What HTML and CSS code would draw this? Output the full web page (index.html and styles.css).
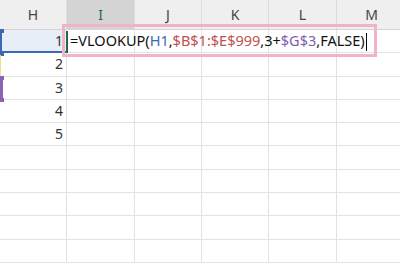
FILE: index.html
```html
<!DOCTYPE html>
<html lang="ja">
<head>
    <meta charset="UTF-8">
    <meta name="viewport" content="width=device-width, initial-scale=1.0">
    <title>VLOOKUP</title>
    <link rel="stylesheet" href="styles.css">
</head>
<body>
    <div class="sheet">
        <div class="grid">
            <div class="col-head">H</div>
            <div class="col-head selected">I</div>
            <div class="col-head">J</div>
            <div class="col-head">K</div>
            <div class="col-head">L</div>
            <div class="col-head">M</div>

            <div class="cell num ref-h1">1</div><div class="cell"></div><div class="cell"></div><div class="cell"></div><div class="cell"></div><div class="cell"></div>
            <div class="cell num">2</div><div class="cell"></div><div class="cell"></div><div class="cell"></div><div class="cell"></div><div class="cell"></div>
            <div class="cell num">3</div><div class="cell"></div><div class="cell"></div><div class="cell"></div><div class="cell"></div><div class="cell"></div>
            <div class="cell num">4</div><div class="cell"></div><div class="cell"></div><div class="cell"></div><div class="cell"></div><div class="cell"></div>
            <div class="cell num">5</div><div class="cell"></div><div class="cell"></div><div class="cell"></div><div class="cell"></div><div class="cell"></div>
            <div class="cell"></div><div class="cell"></div><div class="cell"></div><div class="cell"></div><div class="cell"></div><div class="cell"></div>
            <div class="cell"></div><div class="cell"></div><div class="cell"></div><div class="cell"></div><div class="cell"></div><div class="cell"></div>
            <div class="cell"></div><div class="cell"></div><div class="cell"></div><div class="cell"></div><div class="cell"></div><div class="cell"></div>
            <div class="cell"></div><div class="cell"></div><div class="cell"></div><div class="cell"></div><div class="cell"></div><div class="cell"></div>
            <div class="cell"></div><div class="cell"></div><div class="cell"></div><div class="cell"></div><div class="cell"></div><div class="cell"></div>
        </div>

        <!-- 参照範囲の色枠 -->
        <div class="mark mark-blue"></div>
        <div class="mark mark-yellow"></div>
        <div class="mark mark-purple"></div>

        <!-- 編集中のセル -->
        <div class="active-edge"></div>
        <div class="editor">
            <span>=VLOOKUP(</span><span class="ref-blue">H1</span><span>,</span><span class="ref-red">$B$1:$E$999</span><span>,3+</span><span class="ref-purple">$G$3</span><span>,FALSE)</span><span class="caret"></span>
        </div>
    </div>
</body>
</html>
```

FILE: styles.css
```css
body {
    margin: 0;
    background: #fff;
    overflow: hidden;
    font-family: "Noto Sans", "Noto Sans CJK JP", sans-serif;
}
.sheet {
    position: relative;
    width: 400px;
    height: 272px;
    overflow: hidden;
}
.grid {
    display: grid;
    grid-template-columns: 67px 68px 67px 67px 68px 70px;
    grid-template-rows: 30px repeat(10, 23.3px);
}
.col-head {
    background: #efefef;
    color: #444;
    font-size: 14px;
    display: flex;
    align-items: center;
    justify-content: center;
    border-right: 1px solid #dcdcdc;
    border-bottom: 1px solid #d4d4d4;
    box-sizing: border-box;
}
.col-head.selected {
    background: #d4d4d4;
    color: #1f6b42;
}
.cell {
    border-right: 1px solid #e2e2e2;
    border-bottom: 1px solid #e2e2e2;
    box-sizing: border-box;
}
.cell.num {
    font-size: 14px;
    color: #333;
    text-align: right;
    padding-right: 3px;
    line-height: 22px;
}
.ref-h1 {
    background: #e8eef8;
    border-bottom: 2px solid #3f68b3;
}
.mark {
    position: absolute;
    left: 0;
}
.mark-blue {
    top: 30px;
    height: 24px;
    width: 2px;
    background: #3f68b3;
}
.mark-blue::before,
.mark-blue::after,
.mark-purple::before,
.mark-purple::after {
    content: "";
    position: absolute;
    left: 0;
    width: 4px;
    height: 4px;
    background: inherit;
}
.mark-blue::before, .mark-purple::before { top: -1px; }
.mark-blue::after, .mark-purple::after { bottom: -2px; }
.mark-yellow {
    top: 55px;
    height: 21px;
    width: 1px;
    background: #f3df8c;
}
.mark-purple {
    top: 77px;
    height: 23px;
    width: 3px;
    background: #8a62b6;
}
.active-edge {
    position: absolute;
    left: 66px;
    top: 31px;
    width: 2px;
    height: 22px;
    background: #1f6b42;
}
.editor {
    position: absolute;
    left: 62px;
    top: 24px;
    width: 315px;
    height: 33px;
    box-sizing: border-box;
    border: 3px solid #f1b3c7;
    padding-left: 5px;
    font-size: 14.5px;
    line-height: 27px;
    color: #111;
    white-space: nowrap;
}
.ref-blue { color: #3a68b0; }
.ref-red { color: #c0504d; }
.ref-purple { color: #7f5fb0; }
.caret {
    display: inline-block;
    width: 1px;
    height: 18px;
    background: #000;
    vertical-align: middle;
    margin-left: 1px;
}
```
